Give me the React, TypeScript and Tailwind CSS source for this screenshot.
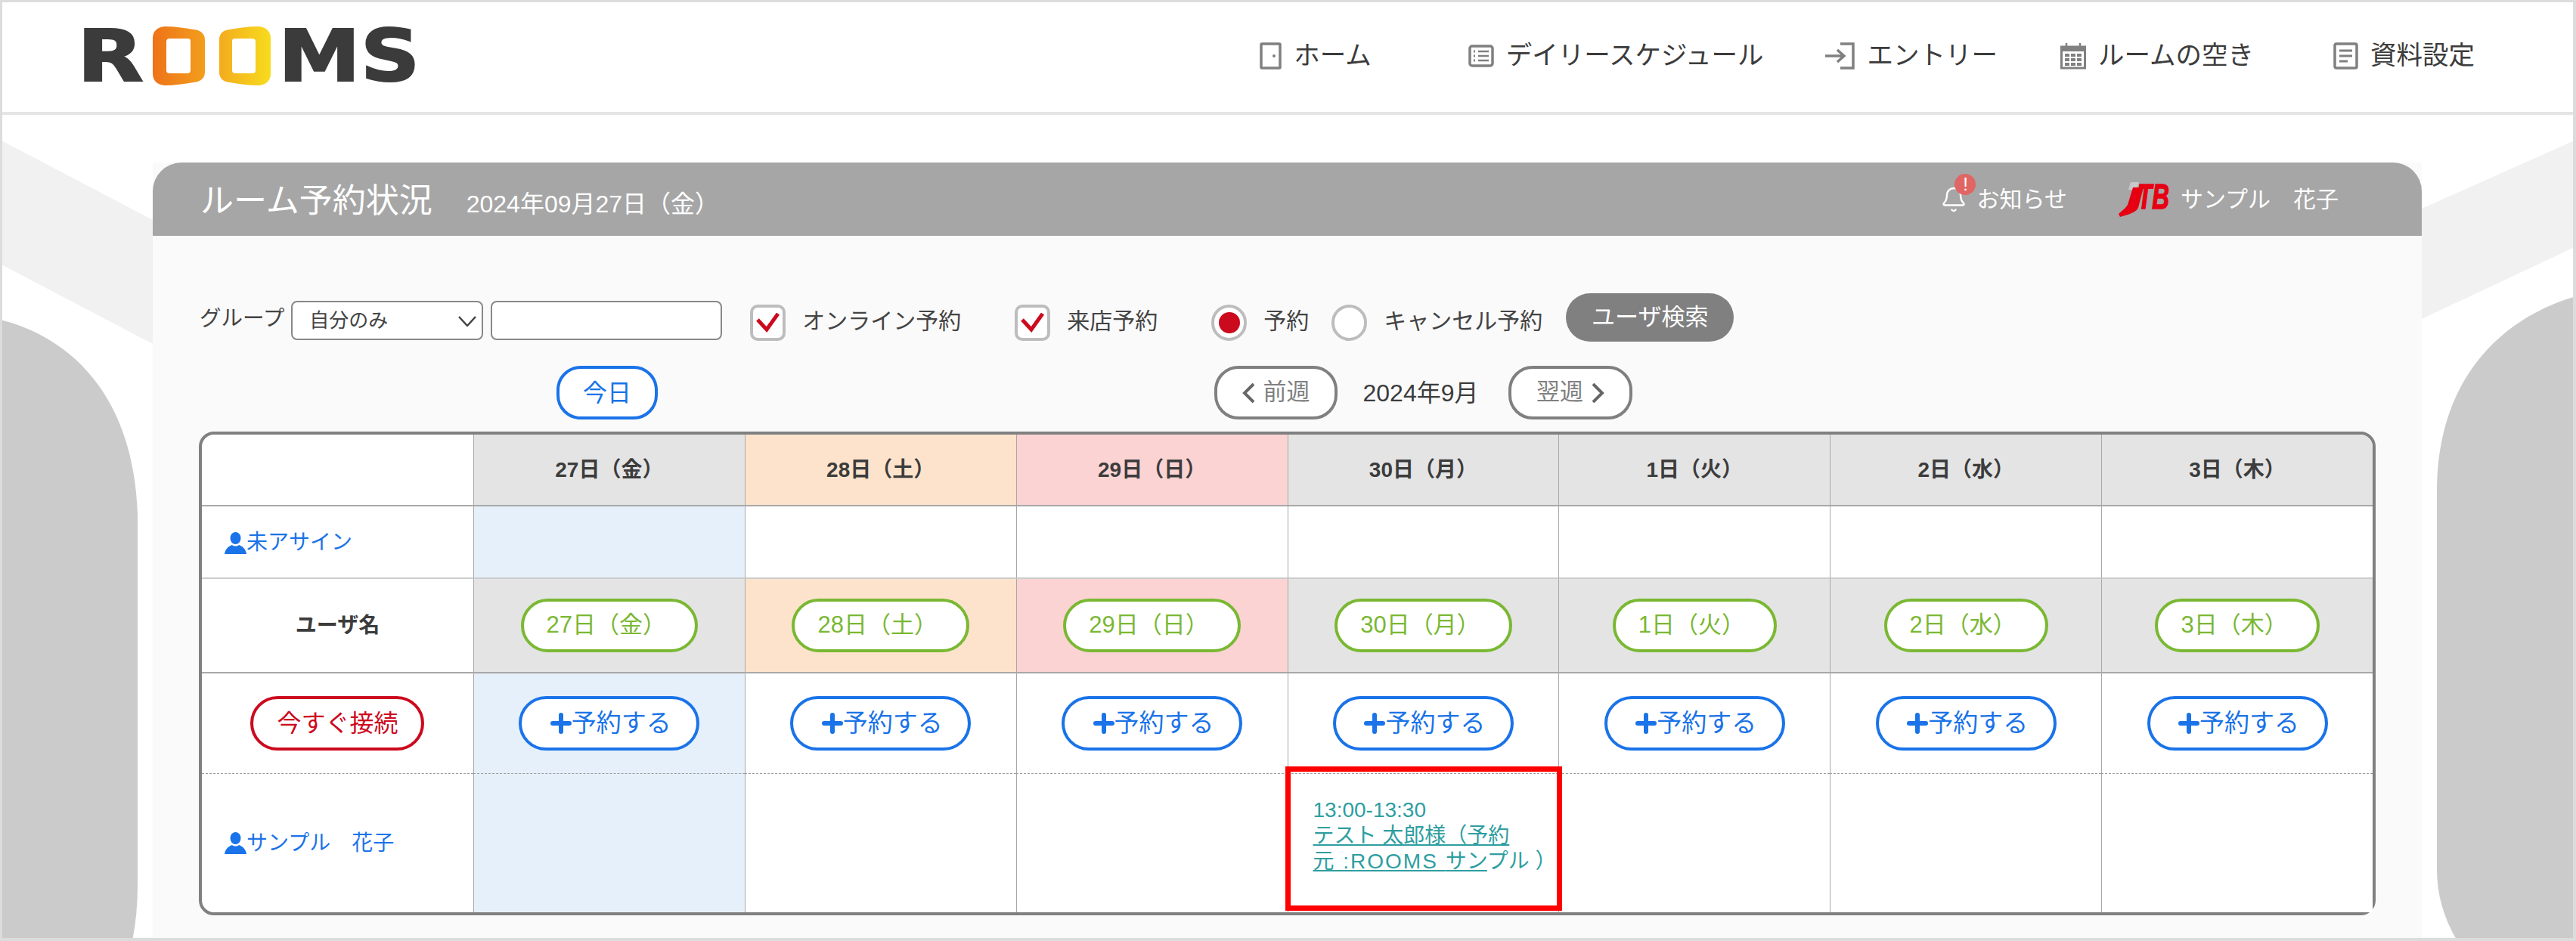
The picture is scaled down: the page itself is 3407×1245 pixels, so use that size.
import { Bell } from "lucide-react";

const days = [
  { label: "27日（金）", head: "bg-[#e4e4e4]", body: "bg-[#e6f0fa]" },
  { label: "28日（土）", head: "bg-[#fde3cc]", body: "bg-white" },
  { label: "29日（日）", head: "bg-[#fbd3d3]", body: "bg-white" },
  { label: "30日（月）", head: "bg-[#e4e4e4]", body: "bg-white" },
  { label: "1日（火）", head: "bg-[#e4e4e4]", body: "bg-white" },
  { label: "2日（水）", head: "bg-[#e4e4e4]", body: "bg-white" },
  { label: "3日（木）", head: "bg-[#e4e4e4]", body: "bg-white" },
];

function Logo() {
  const letters =
    "origin-left text-[#3b3b3b] text-[95px] leading-none font-bold [font-family:'DejaVu_Sans',sans-serif] [-webkit-text-stroke:2px_#3b3b3b]";
  return (
    <div className="ml-[102px] flex items-center">
      <span className={`w-[100px] scale-x-[1.2] ${letters}`}>R</span>
      <svg width="156" height="78" viewBox="0 0 156 78">
        <defs>
          <linearGradient id="rooms-o" gradientUnits="userSpaceOnUse" x1="0" y1="0" x2="156" y2="0">
            <stop offset="0" stopColor="#ee7219" />
            <stop offset="0.5" stopColor="#f3a41d" />
            <stop offset="1" stopColor="#f7dc1e" />
          </linearGradient>
        </defs>
        <path
          fill="url(#rooms-o)"
          fillRule="evenodd"
          d="M0 16C0 6 6 1 16 0C28 0 42 2 54 4C63 5 69 9 69 18V60C69 69 63 73 54 74C42 76 28 78 16 78C6 77 0 72 0 62ZM18 20V58C18 61 20 62 22 62H46C49 62 50 60 50 58V20C50 17 49 16 46 16H22C20 16 18 17 18 20Z"
        />
        <path
          fill="url(#rooms-o)"
          fillRule="evenodd"
          d="M88 18C88 9 93 5 102 4C114 2 126 0 140 0C150 1 156 6 156 16V62C156 72 150 77 140 78C126 78 114 76 102 74C93 73 88 69 88 60ZM105 20V58C105 60 106 62 109 62H132C134 62 136 61 136 58V20C136 17 134 16 132 16H109C106 16 105 17 105 20Z"
        />
      </svg>
      <span className={`ml-[10px] scale-x-[1.15] ${letters}`}>MS</span>
    </div>
  );
}

function DoorIcon() {
  return (
    <svg width="29" height="36" viewBox="0 0 29 36" fill="none" stroke="#808080" strokeWidth="3.5">
      <rect x="2" y="2" width="25" height="32" rx="1" />
      <circle cx="19" cy="18" r="2" fill="#808080" stroke="none" />
    </svg>
  );
}

function ListIcon() {
  return (
    <svg width="34" height="30" viewBox="0 0 34 30" fill="none" stroke="#808080">
      <rect x="2" y="2" width="30" height="26" rx="3" strokeWidth="3.5" />
      <path d="M13 9H27M13 15H27M13 21H27" strokeWidth="2.5" />
      <path d="M7 9H9M7 15H9M7 21H9" strokeWidth="3" />
    </svg>
  );
}

function EntryIcon() {
  return (
    <svg width="40" height="36" viewBox="0 0 40 36" fill="none" stroke="#808080" strokeWidth="3.5">
      <path d="M20 2H37V34H20" />
      <path d="M0 18H25M16 10L25 18L16 26" />
    </svg>
  );
}

function CalendarIcon() {
  return (
    <svg width="34" height="36" viewBox="0 0 34 36" fill="none">
      <rect x="1.5" y="6" width="31" height="28" stroke="#808080" strokeWidth="3" />
      <rect x="1" y="5" width="32" height="7" fill="#808080" />
      <path d="M8 1V8M26 1V8" stroke="#808080" strokeWidth="2.5" />
      <path d="M6 17H28M6 23H28M6 29H28" stroke="#808080" strokeWidth="4" strokeDasharray="6 2" />
    </svg>
  );
}

function DocIcon() {
  return (
    <svg width="33" height="36" viewBox="0 0 33 36" fill="none" stroke="#808080">
      <rect x="2" y="2" width="29" height="32" rx="2" strokeWidth="3.5" />
      <path d="M8 11H25M8 18H25M8 25H19" strokeWidth="3" />
    </svg>
  );
}

function NavItem({ icon, label, className }: { icon: React.ReactNode; label: string; className?: string }) {
  return (
    <a className={`flex items-center gap-[16px] text-[34.5px] text-[#3c3c3c] whitespace-nowrap ${className ?? ""}`}>
      {icon}
      <span>{label}</span>
    </a>
  );
}

function JtbLogo() {
  return (
    <svg width="72" height="46" viewBox="0 0 72 46" className="shrink-0 overflow-visible">
      <path d="M16 0H27L24 10H13Z" fill="#c8c8c8" />
      <path d="M19 7H33L26 34C24 39 14 43 2 46L0 42L9 34L12 30Z" fill="#e60012" />
      <text
        x="25"
        y="35"
        fontFamily="Liberation Sans"
        fontWeight="700"
        fontStyle="italic"
        fontSize="46"
        fill="#e60012"
        stroke="#e60012"
        strokeWidth="1.5"
        textLength="42"
        lengthAdjust="spacingAndGlyphs"
      >
        TB
      </text>
    </svg>
  );
}

function CheckMark() {
  return (
    <svg width="32" height="26" viewBox="0 0 32 26" fill="none" stroke="#cc0a1e" strokeWidth="5">
      <path d="M2 9L14 22L29 1" />
    </svg>
  );
}

function Check({ label, className }: { label: string; className: string }) {
  return (
    <label className={`flex items-start ${className}`}>
      <span className="mt-[15px] flex h-[48px] w-[47px] items-center justify-center rounded-[10px] border-[4px] border-[#bdbdbd] bg-white">
        <CheckMark />
      </span>
      <span className="ml-[22px] mt-[15px] text-[30px] leading-[44px] text-[#444]">{label}</span>
    </label>
  );
}

function Radio({ label, on, className }: { label: string; on?: boolean; className: string }) {
  return (
    <label className={`flex items-start ${className}`}>
      <span className="mt-[15px] flex h-[48px] w-[47px] items-center justify-center rounded-full border-[4px] border-[#bdbdbd] bg-white">
        {on && <span className="h-[28px] w-[28px] rounded-full bg-[#cc0a1e]" />}
      </span>
      <span className="ml-[22px] mt-[15px] text-[30px] leading-[44px] text-[#444]">{label}</span>
    </label>
  );
}

function PersonIcon() {
  return (
    <svg width="29" height="29" viewBox="0 0 29 29" fill="#1a73e8" className="shrink-0">
      <ellipse cx="14.5" cy="8" rx="7" ry="8" />
      <path d="M0 29C1 22 5 19 10 17C12 19 17 19 19 17C24 19 28 22 29 29Z" />
    </svg>
  );
}

function ReserveButton() {
  return (
    <button className="flex h-[72px] w-[239px] items-center justify-center rounded-[36px] border-[4px] border-[#1a73e8] bg-white pl-[4px] text-[33px] text-[#1a73e8]">
      <svg width="28" height="28" viewBox="0 0 28 28" stroke="#1a73e8" strokeWidth="6" strokeLinecap="round">
        <path d="M14 3V25M3 14H25" />
      </svg>
      予約する
    </button>
  );
}

export default function App() {
  return (
    <div className="relative h-[1245px] w-[3407px] overflow-hidden bg-white [font-family:'Liberation_Sans','Noto_Sans_CJK_JP',sans-serif]">
      <svg className="absolute left-0 top-0" width="3407" height="1245" viewBox="0 0 3407 1245">
        <path d="M0 185L202 291V455L0 349Z" fill="#f1f1f1" />
        <path d="M3203 276L3407 185V326L3203 422Z" fill="#f1f1f1" />
        <path d="M0 423C70 440 175 500 182 680V1170Q182 1210 175 1245H0Z" fill="#cbcbcb" />
        <path d="M3407 392C3310 420 3223 500 3223 650V1150Q3223 1200 3250 1245H3407Z" fill="#cbcbcb" />
      </svg>

      <div className="relative flex h-full flex-col">
        <header className="flex h-[152px] items-center border-b-[4px] border-[#e5e5e5] bg-white">
          <Logo />
          <nav className="ml-auto mr-[134px] flex items-center">
            <NavItem icon={<DoorIcon />} label="ホーム" />
            <NavItem className="ml-[128px]" icon={<ListIcon />} label="デイリースケジュール" />
            <NavItem className="ml-[81px]" icon={<EntryIcon />} label="エントリー" />
            <NavItem className="ml-[83px]" icon={<CalendarIcon />} label="ルームの空き" />
            <NavItem className="ml-[105px]" icon={<DocIcon />} label="資料設定" />
          </nav>
        </header>

        <main className="ml-[202px] mt-[63px] flex w-[3001px] flex-1 flex-col bg-[#fafafa]">
          <div className="flex h-[97px] items-center rounded-t-[38px] bg-[#a6a6a6] pl-[63px] pr-[110px] text-white">
            <h1 className="mt-[4px] text-[44px] font-normal">ルーム予約状況</h1>
            <span className="ml-[45px] mt-[12px] text-[32px]">2024年09月27日（金）</span>
            <div className="relative ml-auto flex items-center text-[30px]">
              <Bell size={36} color="white" strokeWidth={1.6} />
              <span className="absolute left-[19px] top-[-11px] flex h-[28px] w-[28px] items-center justify-center rounded-full bg-[#e06666] text-[24px]">
                !
              </span>
              <span className="ml-[12px]">お知らせ</span>
            </div>
            <div className="ml-[68px] flex items-center gap-[10px] text-[30px]">
              <JtbLogo />
              <span>サンプル　花子</span>
            </div>
          </div>

          <div className="mt-[76px] flex h-[64px] items-start pl-[62px]">
            <span className="mt-[11px] text-[28.5px] leading-[44px] text-[#444]">グループ</span>
            <div className="relative ml-[9px] mt-[10px]">
              <select className="h-[52px] w-[254px] appearance-none rounded-[8px] border-[2px] border-[#888] bg-white pl-[22px] text-[26px] text-[#444]">
                <option>自分のみ</option>
              </select>
              <svg className="absolute right-[9px] top-[20px]" width="24" height="14" viewBox="0 0 24 14" fill="none" stroke="#444" strokeWidth="2.5">
                <path d="M1 1L12 13L23 1" />
              </svg>
            </div>
            <input className="ml-[10px] mt-[10px] h-[52px] w-[306px] rounded-[8px] border-[2px] border-[#888] bg-white" />
            <Check className="ml-[37px]" label="オンライン予約" />
            <Check className="ml-[71px]" label="来店予約" />
            <Radio className="ml-[71px]" label="予約" on />
            <Radio className="ml-[30px]" label="キャンセル予約" />
            <button className="ml-[31px] h-[64px] w-[222px] rounded-[32px] bg-[#808080] text-[31px] text-white">
              ユーザ検索
            </button>
          </div>

          <div className="mt-[32px] flex h-[71px] items-center pl-[534px]">
            <button className="h-[71px] w-[134px] rounded-[32px] border-[4px] border-[#1a73e8] bg-white text-[32px] text-[#1a73e8]">
              今日
            </button>
            <button className="ml-[736px] flex h-[71px] w-[163px] items-center justify-center gap-[10px] rounded-[32px] border-[4px] border-[#808080] bg-white text-[31px] text-[#808080]">
              <svg width="18" height="26" viewBox="0 0 18 26" fill="none" stroke="#666" strokeWidth="4">
                <path d="M15 1L3 13L15 25" />
              </svg>
              前週
            </button>
            <span className="w-[226px] pr-[6px] text-center text-[32px] text-[#3c3c3c]">2024年9月</span>
            <button className="flex h-[71px] w-[164px] items-center justify-center gap-[10px] rounded-[32px] border-[4px] border-[#808080] bg-white text-[31px] text-[#808080]">
              翌週
              <svg width="18" height="26" viewBox="0 0 18 26" fill="none" stroke="#666" strokeWidth="4">
                <path d="M3 1L15 13L3 25" />
              </svg>
            </button>
          </div>

          <div className="ml-[61px] mt-[16px] w-[2879px] rounded-[20px] border-[4px] border-[#808080] bg-white">
            <div className="grid grid-cols-8 grid-rows-[95px_96px_125px_133px_183px]">
              <div className="rounded-tl-[16px] border-b-[2px] border-[#a8a8a8]" />
              {days.map((d, i) => (
                <div
                  key={d.label}
                  className={`flex items-center justify-center border-b-[2px] border-l border-[#a8a8a8] text-[28px] font-bold text-[#3c3c3c] ${d.head} ${i === 6 ? "rounded-tr-[16px]" : ""}`}
                >
                  {d.label}
                </div>
              ))}

              <div className="flex items-center border-b-[2px] border-[#cccccc] pl-[30px] pt-[2px] text-[28px] text-[#1a73e8]">
                <PersonIcon />
                未アサイン
              </div>
              {days.map((d) => (
                <div key={d.label} className={`border-b-[2px] border-l border-b-[#cccccc] border-l-[#a8a8a8] ${d.body}`} />
              ))}

              <div className="flex items-center justify-center border-b-[2px] border-[#a8a8a8] text-[28px] font-bold text-[#3c3c3c]">
                ユーザ名
              </div>
              {days.map((d) => (
                <div
                  key={d.label}
                  className={`flex items-center justify-center border-b-[2px] border-l border-[#a8a8a8] ${d.head}`}
                >
                  <button className="h-[71px] whitespace-nowrap rounded-[36px] border-[4px] border-[#7ab833] bg-white pl-[30px] pr-[38px] text-left text-[31px] text-[#7ab833]">
                    {d.label}
                  </button>
                </div>
              ))}

              <div className="flex items-center justify-center border-b border-dashed border-[#999]">
                <button className="h-[72px] w-[230px] rounded-[36px] border-[4px] border-[#cc0a1e] bg-white text-[32px] text-[#cc0a1e]">
                  今すぐ接続
                </button>
              </div>
              {days.map((d) => (
                <div
                  key={d.label}
                  className={`flex items-center justify-center border-b border-l border-dashed border-b-[#999] border-l-[#a8a8a8] [border-left-style:solid] ${d.body}`}
                >
                  <ReserveButton />
                </div>
              ))}

              <div className="flex items-center pl-[30px] text-[28px] text-[#1a73e8]">
                <PersonIcon />
                サンプル　花子
              </div>
              {days.map((d, i) => (
                <div key={d.label} className={`relative border-l border-[#a8a8a8] ${d.body} ${i === 3 ? "z-10" : ""}`}>
                  {i === 3 && (
                    <>
                      <div className="whitespace-nowrap pl-[33px] pt-[31px] text-[28px] leading-[34px] text-[#2e9ea0]">
                        <div>13:00-13:30</div>
                        <a className="underline">テスト 太郎様（予約</a>
                        <br />
                        <a className="underline">
                          <span className="tracking-[2px]">元 :ROOMS </span>サン
                        </a>
                        <span>プル ）</span>
                      </div>
                      <div className="absolute left-[-4px] top-[-10px] h-[191px] w-[366px] border-[7px] border-[#ff0000]" />
                    </>
                  )}
                </div>
              ))}
            </div>
          </div>
        </main>
      </div>

      <div className="absolute inset-0 border-b-[4px] border-l-[3px] border-r-[4px] border-t-[3px] border-[#dcdcdc]" />
    </div>
  );
}
